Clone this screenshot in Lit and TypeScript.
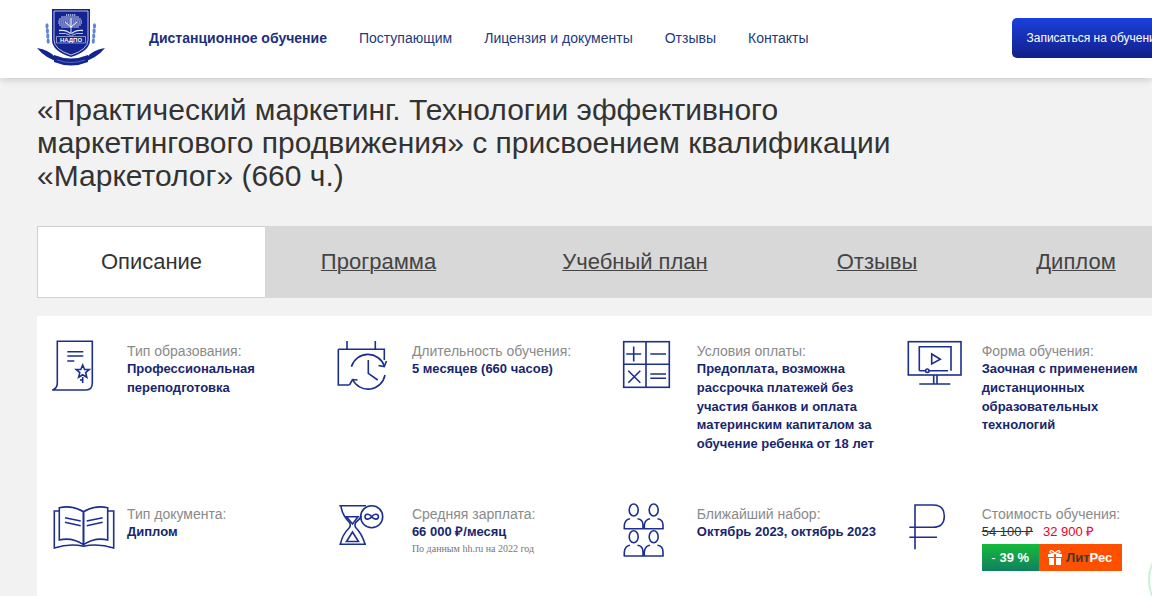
import { LitElement, html, css, svg } from 'lit'
import { customElement } from 'lit/decorators.js'

const icons = {
  doc: svg`<path d="M5.3 1.3H40.3V43Q40.3 50 34 50H0.3Q5.3 48.5 5.3 43Z"/><path d="M15.3 11.7H31.3M15.3 16H31.3M15.3 21H22.3"/><path d="M30.7 25L32.6 29.5H37.2L33.6 32.6L34.8 37.2L30.7 34.7L26.6 37.2L27.8 32.6L24.2 29.5H28.8Z"/><path d="M30.7 37V43M29 39V41"/>`,
  clock: svg`<path d="M10 1V9.3M38.3 1V9.3M1.3 9.3H47.3V20M1.3 9.3V45H12.3"/><path d="M47.3 26A17.3 17.3 0 0 0 14.4 26.7M15.5 39.5A17.3 17.3 0 0 0 48 35"/><path d="M41.5 25.5L47.3 26.5L49.5 21M20.5 40L15.5 39.5L12.5 45"/><path d="M31.3 20V33.3L40.7 40"/>`,
  calc: svg`<rect x="1.7" y="1.7" width="45.6" height="45.6"/><path d="M24 1.7V47.3M1.7 24.3H47.3"/><path d="M11.7 6.5V21.5M4.2 14H19.2M28.3 14H44M6.3 30.7L18.3 42.7M18.3 30.7L6.3 42.7M28.3 34H44M28.3 38.3H44"/>`,
  monitor: svg`<rect x="1.3" y="1.7" width="52.7" height="33.3"/><path d="M12.3 30.7V6.7H44V30.7"/><path d="M24.7 14L33.3 19.3L24.7 24Z"/><path d="M12.3 30.7H18.5M22 30.7H41"/><circle cx="20.3" cy="30.7" r="1.7"/><path d="M26.7 35V44M30 35V44M12.3 44H43.3"/>`,
  book: svg`<path d="M7.3 37V4.7Q20 2 31.5 8.7V41.7Q20 34 7.3 37Z"/><path d="M55.7 37V4.7Q43 2 31.5 8.7V41.7Q43 34 55.7 37Z"/><path d="M7.3 8H2.3V45Q18 40 31.5 43.3Q46 40 61.7 45V8H55.7"/><path d="M13 14.7L28.7 18M13 19.3L28.7 22.7M34.7 18L50.7 14.7M34.7 22.7L50.7 19.3"/>`,
  hourglass: svg`<path d="M2.3 2.7H29M2.3 41.3H29M4 3Q5 12 12.5 19.5Q14 22 12.5 24.5Q5 32 3.5 41M24.5 13Q22 17 18.7 19.5Q17.3 22 18.7 24.5Q25 31 28 41"/><path d="M9.5 13.7H21L15.5 21ZM15.5 29L9.5 38.5H21.5Z"/><circle cx="34.7" cy="13.7" r="11"/><path d="M34.7 13.7C32 10 28 11 28 13.7C28 16.4 32 17.4 34.7 13.7C37.4 10 41.4 11 41.4 13.7C41.4 16.4 37.4 17.4 34.7 13.7Z"/>`,
  people: svg`<ellipse cx="11.7" cy="7" rx="4.5" ry="6"/><ellipse cx="31.7" cy="7" rx="4.5" ry="6"/><ellipse cx="11.7" cy="33.7" rx="4.5" ry="6"/><ellipse cx="31.7" cy="33.7" rx="4.5" ry="6"/><path d="M2.3 25.7V22Q3 16.5 8 15.7M15.5 15.7Q21 16.5 21 22V25.7M22.3 25.7V22Q23 16.5 28 15.7M35.5 15.7Q41 16.5 41 22V25.7"/><path d="M1.7 25.7H41.7"/><path d="M2.3 53V49Q3 43 8 42.3M15.5 42.3Q21 43 21 49V53M22.3 53V49Q23 43 28 42.3M35.5 42.3Q41 43 41 49V53"/><path d="M1.7 53H41.7"/>`,
  ruble: svg`<path d="M8 46.3V2H26Q37.3 2 37.3 13Q37.3 24.3 26 24.3H2.3M2.3 34.3H30"/>`,
}

const rows = [
  [
    { icon: icons.doc, label: 'Тип образования:', lines: ['Профессиональная', 'переподготовка'] },
    { icon: icons.clock, label: 'Длительность обучения:', lines: ['5 месяцев (660 часов)'] },
    {
      icon: icons.calc,
      label: 'Условия оплаты:',
      lines: ['Предоплата, возможна', 'рассрочка платежей без', 'участия банков и оплата', 'материнским капиталом за', 'обучение ребенка от 18 лет'],
    },
    {
      icon: icons.monitor,
      label: 'Форма обучения:',
      lines: ['Заочная с применением', 'дистанционных', 'образовательных', 'технологий'],
    },
  ],
  [
    { icon: icons.book, label: 'Тип документа:', lines: ['Диплом'] },
    { icon: icons.hourglass, label: 'Средняя зарплата:', lines: ['66 000 ₽/месяц'], note: 'По данным hh.ru на 2022 год' },
    { icon: icons.people, label: 'Ближайший набор:', lines: ['Октябрь 2023, октябрь 2023'] },
    { icon: icons.ruble, label: 'Стоимость обучения:', lines: [], price: true },
  ],
]

// dots of the tree crown on the logo
const crownDots: [number, number][] = []
for (let y = 7; y <= 20; y += 2) {
  const half = 12 * Math.sqrt(Math.max(0, 1 - ((y - 14) / 7.5) ** 2))
  for (let x = 34 - half; x <= 34 + half; x += 2) crownDots.push([x, y])
}

@customElement('app-root')
export class AppRoot extends LitElement {
  static styles = css`
    :host {
      display: block;
      position: relative;
      width: 1152px;
      height: 596px;
      overflow: hidden;
      background: #f2f2f2;
      font-family: 'Liberation Sans', Arial, sans-serif;
    }
    header {
      display: flex;
      align-items: center;
      height: 78px;
      padding-left: 37px;
      background: #fff;
      box-shadow: 0 1px 8px rgba(0, 0, 0, 0.2);
      position: relative;
    }
    .logo {
      flex: none;
      width: 68px;
      height: 60px;
      margin-top: -2px;
    }
    nav {
      display: flex;
      gap: 32px;
      margin-left: 44px;
      margin-top: -2px;
      font-size: 14px;
      color: #23397f;
      white-space: nowrap;
    }
    nav .active {
      font-weight: 700;
      color: #1c2f7c;
    }
    .cta {
      flex: none;
      width: 180px;
      height: 40px;
      margin-left: 204px;
      margin-top: -2px;
      padding-left: 14px;
      box-sizing: border-box;
      display: flex;
      align-items: center;
      border-radius: 5px;
      background: linear-gradient(#1a40dc, #121f88);
      color: #fff;
      font-size: 12px;
      white-space: nowrap;
    }
    h1 {
      margin: 15px 0 0 37px;
      width: 900px;
      font-size: 30px;
      font-weight: 400;
      line-height: 33px;
      color: #333;
    }
    .tabs {
      display: grid;
      grid-template-columns: 228px 227px 286px 198px 200px;
      width: 1139px;
      height: 72px;
      margin: 34px 0 0 37px;
      background: #d8d8d8;
      font-size: 22px;
      color: #444;
    }
    .tabs span {
      display: flex;
      align-items: center;
      justify-content: center;
    }
    .tabs u {
      text-decoration-thickness: 1px;
    }
    .tabs .current {
      background: #fff;
      border: 1px solid #d0d0d0;
      border-right: none;
      color: #333;
    }
    .panel {
      margin: 18px 0 0 37px;
      height: 280px;
      padding: 24px 0 0 15px;
      box-sizing: border-box;
      background: #fff;
    }
    .row {
      display: grid;
      grid-template-columns: repeat(4, 284.9px);
      height: 163px;
    }
    .cell {
      display: flex;
    }
    .cell svg {
      flex: none;
      width: 75px;
      height: 60px;
      fill: none;
      stroke: #1c2f8f;
      stroke-width: 1.6;
    }
    .text {
      padding-top: 2px;
    }
    .label {
      font-size: 14px;
      line-height: 18px;
      color: #8a8a8a;
      white-space: nowrap;
    }
    .value {
      font-size: 13px;
      font-weight: 700;
      line-height: 18.75px;
      color: #18266e;
      white-space: nowrap;
    }
    .note {
      font-family: 'Liberation Serif', serif;
      font-size: 10px;
      line-height: 14px;
      color: #777;
      white-space: nowrap;
    }
    .prices {
      display: flex;
      gap: 10px;
      margin-top: 1px;
      font-size: 13px;
      line-height: 16px;
      white-space: nowrap;
    }
    .old {
      color: #333;
      text-decoration: line-through;
    }
    .new {
      color: #f00022;
    }
    .badges {
      display: flex;
      height: 27px;
      margin-top: 4px;
      font-size: 13px;
      font-weight: 700;
    }
    .discount {
      width: 57px;
      display: flex;
      align-items: center;
      justify-content: center;
      gap: 4px;
      color: #fff;
      background: linear-gradient(#14bb3c, #10805f);
    }
    .discount i {
      font-style: normal;
      font-weight: 400;
    }
    .litres {
      width: 83px;
      display: flex;
      align-items: center;
      justify-content: center;
      gap: 4px;
      color: #fff;
      background: #ff5000;
    }
    .litres em {
      font-style: normal;
      color: #3a3a3a;
    }
    .cell .litres svg {
      width: 14px;
      height: 15px;
      fill: #fff;
      stroke: none;
    }
    .bubble {
      position: absolute;
      left: 1148px;
      top: 540px;
      width: 80px;
      height: 80px;
      border: 2px solid #c9f2d8;
      border-radius: 50%;
      box-sizing: border-box;
    }
  `

  private renderLogo() {
    const laurel = [18, 23, 28, 33]
    return svg`
      <svg class="logo" viewBox="0 0 68 60">
        <g fill="#5f86d8">
          ${laurel.map(
            (y, i) => svg`
              <ellipse cx=${10 + i * 0.4} cy=${y} rx="1.6" ry="2.8"/>
              <ellipse cx=${57.5 - i * 0.4} cy=${y} rx="1.6" ry="2.8"/>
            `,
          )}
        </g>
        <path d="M0 40Q12 42 18 49L22 54Q8 50 0 40ZM68 40Q56 42 50 49L46 54Q60 50 68 40Z" fill="#13238f"/>
        <path d="M15 1H53V32Q53 43 34 49Q15 43 15 32Z" fill="#13238f"/>
        <path d="M17 3H51V32Q51 41.5 34 47Q17 41.5 17 32Z" fill="none" stroke="#fff" stroke-width="0.7"/>
        <g fill="#e4e9fb">
          ${crownDots.map(([x, y]) => svg`<circle cx=${x} cy=${y} r="0.8"/>`)}
        </g>
        <path d="M34 10V26M28 14L34 19L40 14" stroke="#fff" stroke-width="0.9" fill="none"/>
        <path d="M22 22.5Q29 21.5 33.5 25.5M46 22.5Q39 21.5 34.5 25.5" stroke="#dfe6fa" stroke-width="1.3" fill="none"/>
        <path d="M22 25.5Q29 24.5 33.5 27.5M46 25.5Q39 24.5 34.5 27.5" stroke="#dfe6fa" stroke-width="0.8" fill="none"/>
        <path d="M19.5 28.5H48.5V35H19.5Z" fill="none" stroke="#fff" stroke-width="0.5"/>
        <text x="34" y="34.3" text-anchor="middle" font-size="6" font-weight="700" fill="#fff">НАДПО</text>
        <path d="M17 47Q34 54 51 47V54Q34 61 17 54Z" fill="#13238f"/>
        <path d="M20 52Q34 57 48 52" stroke="#8ea6e6" stroke-width="0.5" fill="none"/>
      </svg>
    `
  }

  render() {
    return html`
      <header>
        ${this.renderLogo()}
        <nav>
          <span class="active">Дистанционное обучение</span>
          <span>Поступающим</span>
          <span>Лицензия и документы</span>
          <span>Отзывы</span>
          <span>Контакты</span>
        </nav>
        <div class="cta">Записаться на обучение</div>
      </header>
      <h1>
        «Практический маркетинг. Технологии эффективного<br />
        маркетингового продвижения» с присвоением квалификации<br />
        «Маркетолог» (660 ч.)
      </h1>
      <div class="tabs">
        <span class="current">Описание</span>
        <span><u>Программа</u></span>
        <span><u>Учебный план</u></span>
        <span><u>Отзывы</u></span>
        <span><u>Диплом</u></span>
      </div>
      <div class="panel">
        ${rows.map(
          (row) => html`
            <div class="row">
              ${row.map(
                (item: any) => html`
                  <div class="cell">
                    <svg viewBox="0 0 75 60">${item.icon}</svg>
                    <div class="text">
                      <div class="label">${item.label}</div>
                      ${item.lines.map((l: string) => html`<div class="value">${l}</div>`)}
                      ${item.note ? html`<div class="note">${item.note}</div>` : ''}
                      ${item.price ? this.renderPrice() : ''}
                    </div>
                  </div>
                `,
              )}
            </div>
          `,
        )}
      </div>
      <div class="bubble"></div>
    `
  }

  private renderPrice() {
    return html`
      <div class="prices"><span class="old">54 100 ₽</span><span class="new">32 900 ₽</span></div>
      <div class="badges">
        <div class="discount"><i>-</i><span>39 %</span></div>
        <div class="litres">
          <svg viewBox="0 0 14 15">
            <path d="M0 4H6V7H0ZM8 4H14V7H8ZM1 8H6V15H1ZM8 8H13V15H8ZM6 4H8V3H6Z"/>
            <path d="M7 3.5C5 0 2 0 2 2C2 3.5 5 3.5 7 3.5C9 3.5 12 3.5 12 2C12 0 9 0 7 3.5Z" fill="none" stroke="#fff" stroke-width="1.2"/>
          </svg>
          <span><em>Лит</em>Рес</span>
        </div>
      </div>
    `
  }
}
